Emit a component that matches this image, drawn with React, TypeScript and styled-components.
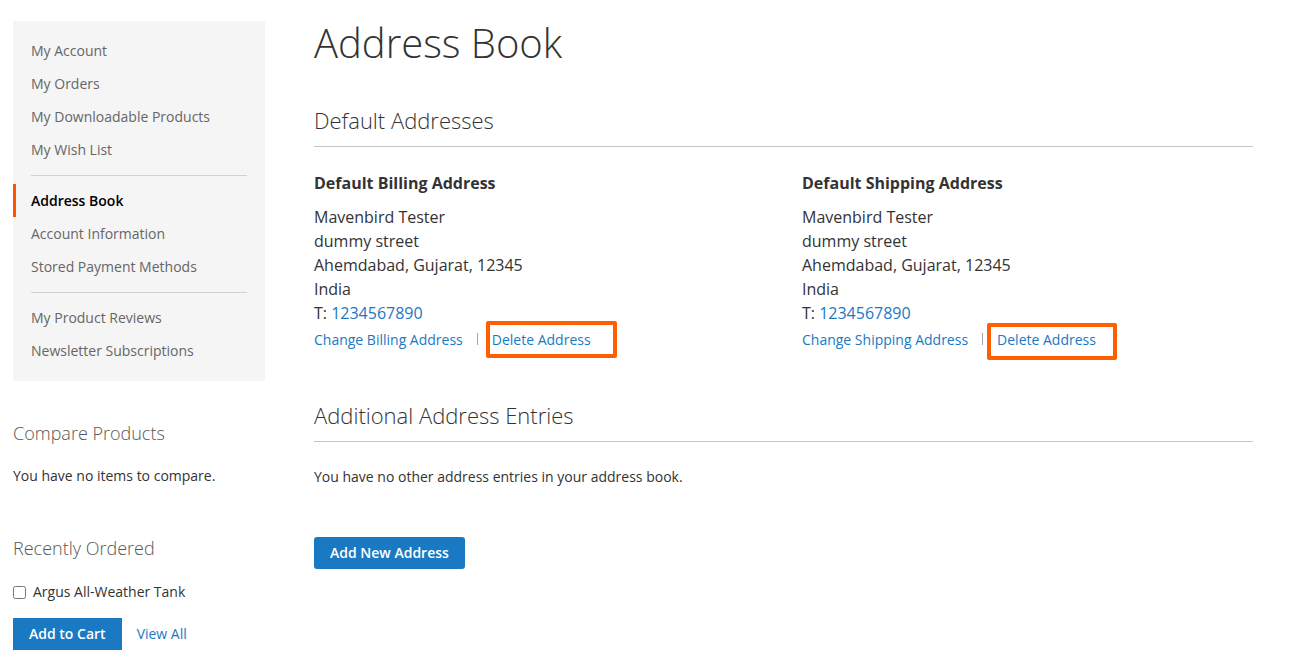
import React from 'react'
import styled, { createGlobalStyle } from 'styled-components'

const GlobalStyle = createGlobalStyle`
  html, body {
    margin: 0;
    padding: 0;
    background: #fff;
    overflow: hidden;
  }
  body {
    font-family: "Open Sans", "Liberation Sans", sans-serif;
    color: #333;
    font-size: 14px;
  }
  a {
    color: #1979c3;
    text-decoration: none;
  }
`

const Page = styled.div`
  display: flex;
  width: 1294px;
  height: 664px;
  padding: 21px 41px 0 13px;
  box-sizing: border-box;
  overflow: hidden;
`

const SideBar = styled.aside`
  width: 252px;
  margin-right: 49px;
  flex: none;
`

const Nav = styled.nav`
  background: #f5f5f5;
  height: 360px;
  padding: 13px 0 0;
  box-sizing: border-box;
`

const NavItem = styled.div<{ $active?: boolean }>`
  height: 33px;
  line-height: 33px;
  padding-left: ${p => (p.$active ? '15px' : '18px')};
  font-size: 14px;
  color: ${p => (p.$active ? '#000' : '#666')};
  font-weight: ${p => (p.$active ? 600 : 400)};
  border-left: ${p => (p.$active ? '3px solid #ff5501' : 'none')};
`

const NavDivider = styled.div`
  height: 1px;
  background: #d1d1d1;
  margin: 9px 18px 8px;
`

const BlockTitle = styled.div`
  font-size: 18px;
  font-weight: 300;
  line-height: 24px;
  color: #575757;
`

const CompareBlock = styled.div`
  margin-top: 40px;
`

const BlockText = styled.div`
  margin-top: 19px;
  line-height: 24px;
  height: 24px;
`

const RecentBlock = styled.div`
  margin-top: 48px;
`

const CheckRow = styled.label`
  display: flex;
  align-items: center;
  margin-top: 20px;
  line-height: 24px;
`

const Check = styled.input`
  width: 13px;
  height: 13px;
  margin: 0 7px 0 0;
`

const Actions = styled.div`
  display: flex;
  align-items: center;
  gap: 15px;
  margin-top: 14px;
`

const ViewAll = styled.a`
  margin-bottom: 2px;
`

const Button = styled.button`
  background: #1979c3;
  border: none;
  border-radius: 0;
  color: #fff;
  font-family: inherit;
  font-size: 14px;
  font-weight: 600;
  line-height: 18px;
  height: 32px;
  padding: 0 16px;
`

const RoundButton = styled(Button)`
  border-radius: 3px;
`

const Main = styled.main`
  flex: 1;
  min-width: 0;
`

const PageTitle = styled.h1`
  margin: 0;
  font-size: 40px;
  font-weight: 300;
  line-height: 44px;
  color: #333;
`

const SectionTitle = styled.div<{ $gap: number }>`
  margin-top: ${p => p.$gap}px;
  padding-bottom: 12px;
  border-bottom: 1px solid #c6c6c6;
  font-size: 22px;
  font-weight: 300;
  line-height: 28px;
  color: #333;
`

const Columns = styled.div`
  display: grid;
  grid-template-columns: 488px 1fr;
  margin-top: 24px;
`

const AddressCard = styled.div``

const CardTitle = styled.div`
  font-size: 16px;
  font-weight: 700;
  line-height: 24px;
  color: #333;
`

const Address = styled.div`
  margin-top: 10px;
  font-size: 16px;
  line-height: 24px;
  color: #333;
`

const CardActions = styled.div`
  display: flex;
  align-items: center;
  height: 28px;
  font-size: 14px;
  position: relative;
`

const Separator = styled.span`
  width: 1px;
  height: 12px;
  background: #a6a6a6;
  margin: 0 14px;
`

const Highlight = styled.span<{ $left: number; $top: number; $width: number }>`
  position: absolute;
  left: ${p => p.$left}px;
  top: ${p => p.$top}px;
  width: ${p => p.$width}px;
  height: 37px;
  box-sizing: border-box;
  border: 4px solid #ff5f00;
  border-radius: 2px;
`

const Note = styled.div`
  margin-top: 23px;
  font-size: 14px;
  line-height: 24px;
  color: #333;
`

const NewAddress = styled.div`
  margin-top: 48px;
`

const App: React.FC = () => {
  return (
    <>
      <GlobalStyle />
      <Page>
        <SideBar>
          <Nav>
            <NavItem>My Account</NavItem>
            <NavItem>My Orders</NavItem>
            <NavItem>My Downloadable Products</NavItem>
            <NavItem>My Wish List</NavItem>
            <NavDivider />
            <NavItem $active>Address Book</NavItem>
            <NavItem>Account Information</NavItem>
            <NavItem>Stored Payment Methods</NavItem>
            <NavDivider />
            <NavItem>My Product Reviews</NavItem>
            <NavItem>Newsletter Subscriptions</NavItem>
          </Nav>
          <CompareBlock>
            <BlockTitle>Compare Products</BlockTitle>
            <BlockText>You have no items to compare.</BlockText>
          </CompareBlock>
          <RecentBlock>
            <BlockTitle>Recently Ordered</BlockTitle>
            <CheckRow>
              <Check type="checkbox" />
              Argus All-Weather Tank
            </CheckRow>
            <Actions>
              <Button>Add to Cart</Button>
              <ViewAll href="#">View All</ViewAll>
            </Actions>
          </RecentBlock>
        </SideBar>
        <Main>
          <PageTitle>Address Book</PageTitle>
          <SectionTitle $gap={41}>Default Addresses</SectionTitle>
          <Columns>
            <AddressCard>
              <CardTitle>Default Billing Address</CardTitle>
              <Address>
                Mavenbird Tester<br />
                dummy street<br />
                Ahemdabad, Gujarat, 12345<br />
                India<br />
                T: <a href="#">1234567890</a>
              </Address>
              <CardActions>
                <a href="#">Change Billing Address</a>
                <Separator />
                <a href="#">Delete Address</a>
                <Highlight $left={172} $top={-4} $width={131} />
              </CardActions>
            </AddressCard>
            <AddressCard>
              <CardTitle>Default Shipping Address</CardTitle>
              <Address>
                Mavenbird Tester<br />
                dummy street<br />
                Ahemdabad, Gujarat, 12345<br />
                India<br />
                T: <a href="#">1234567890</a>
              </Address>
              <CardActions>
                <a href="#">Change Shipping Address</a>
                <Separator />
                <a href="#">Delete Address</a>
                <Highlight $left={185} $top={-2} $width={130} />
              </CardActions>
            </AddressCard>
          </Columns>
          <SectionTitle $gap={48}>Additional Address Entries</SectionTitle>
          <Note>You have no other address entries in your address book.</Note>
          <NewAddress>
            <RoundButton>Add New Address</RoundButton>
          </NewAddress>
        </Main>
      </Page>
    </>
  )
}

export default App
